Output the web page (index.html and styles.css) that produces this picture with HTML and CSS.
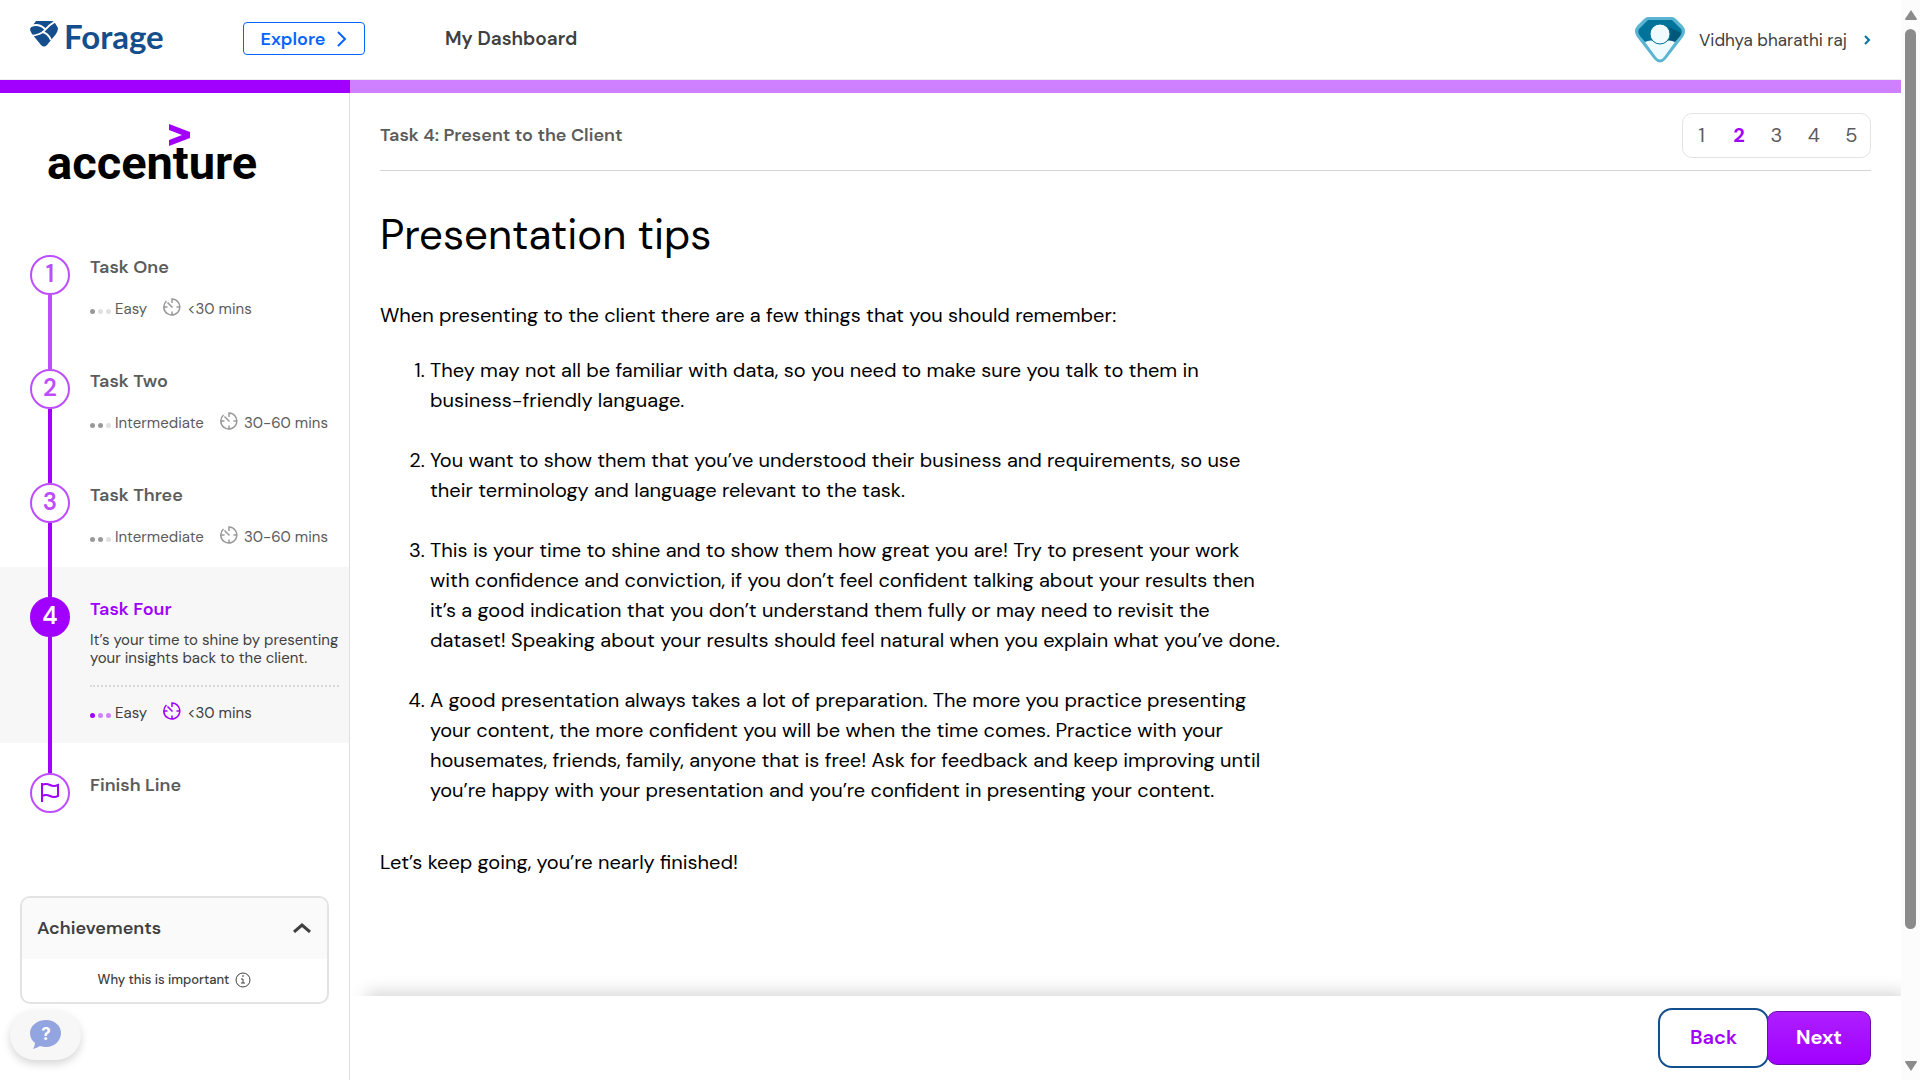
FILE: index.html
```html
<!DOCTYPE html>
<html lang="en">
<head>
<meta charset="utf-8">
<title>Task 4: Present to the Client</title>
<link rel="stylesheet" href="styles.css">
</head>
<body>
<div class="window">
  <div class="app">
    <header class="topbar">
      <a class="brand" href="#" aria-label="Forage">
        <svg class="brand-mark" viewBox="0 0 28 26" aria-hidden="true">
          <path fill="#144e8c" d="M6 0H22Q24 0 25 2L28 7Q28 10 26 13L17 24Q14 27 11 24L2 13Q0 10 0 8Q1 6 3 4Z"/>
          <path fill="none" stroke="#fff" stroke-width="2" d="M26 0Q19 4 15 9T0 15M1 5Q9 2 15 8M12 11Q18 12 21 19"/>
        </svg>
        <span class="brand-name">Forage</span>
      </a>
      <button class="explore" type="button">Explore
        <svg viewBox="0 0 10 16" aria-hidden="true"><path d="M1 1l7 7-7 7"/></svg>
      </button>
      <a class="nav-link" href="#">My Dashboard</a>
      <a class="user" href="#">
        <svg class="avatar" viewBox="0 0 50 46" aria-hidden="true">
          <path fill="#5ab4d2" d="M13 0H37Q39 0 41 2L48 9Q52 14 48 20L31 42Q25 49 19 42L2 20Q-2 14 2 9L9 2Q11 0 13 0Z"/>
          <path fill="#00739b" d="M13 3H37L46 12Q48 15 45 19L39 26H11L5 19Q2 15 4 12Z"/>
          <path fill="#005878" d="M34 10L46 16Q46 18 44 20L39 26L30 24Z"/>
          <path fill="#effbff" d="M10 25Q17 21 25 27Q33 21 40 25L29 40Q25 45 21 40Z"/>
          <circle cx="25" cy="17" r="10" fill="#effbff" stroke="#00739b"/>
        </svg>
        <span>Vidhya bharathi raj</span>
        <svg class="user-chevron" viewBox="0 0 8 10" aria-hidden="true"><path d="M2 1l4 4-4 4"/></svg>
      </a>
    </header>
    <div class="progress"><div class="progress-done"></div></div>
    <div class="columns">
      <aside class="sidebar">
        <svg class="company" viewBox="0 0 216 74" role="img" aria-label="accenture">
          <path fill="#a100ff" d="M122 2L143 10V16L122 24V18L135 13L122 8Z"/>
          <text class="company-name" x="0" y="57">accenture</text>
        </svg>
        <ol class="tasks">
          <li class="task">
            <div class="rail rail-first rail-soft"><span class="step">1</span></div>
            <div class="task-body">
              <a class="task-title" href="#">Task One</a>
              <div class="meta"><span class="dots"><i class="on"></i><i></i><i></i></span>Easy
                <svg class="clock" viewBox="0 0 36 36" aria-hidden="true"><path d="M18 10V2A16 16 0 1 1 7 6M18 27v7M2 18h7M27 18h7M9 9l10 10"/></svg>&lt;30 mins</div>
            </div>
          </li>
          <li class="task">
            <div class="rail rail-after-soft"><span class="step">2</span></div>
            <div class="task-body">
              <a class="task-title" href="#">Task Two</a>
              <div class="meta"><span class="dots"><i class="on"></i><i class="on"></i><i></i></span>Intermediate
                <svg class="clock" viewBox="0 0 36 36" aria-hidden="true"><path d="M18 10V2A16 16 0 1 1 7 6M18 27v7M2 18h7M27 18h7M9 9l10 10"/></svg>30-60 mins</div>
            </div>
          </li>
          <li class="task">
            <div class="rail"><span class="step">3</span></div>
            <div class="task-body">
              <a class="task-title" href="#">Task Three</a>
              <div class="meta"><span class="dots"><i class="on"></i><i class="on"></i><i></i></span>Intermediate
                <svg class="clock" viewBox="0 0 36 36" aria-hidden="true"><path d="M18 10V2A16 16 0 1 1 7 6M18 27v7M2 18h7M27 18h7M9 9l10 10"/></svg>30-60 mins</div>
            </div>
          </li>
          <li class="task task-active">
            <div class="rail"><span class="step">4</span></div>
            <div class="task-body">
              <a class="task-title" href="#">Task Four</a>
              <p class="task-text">It’s your time to shine by presenting your insights back to the client.</p>
              <div class="meta"><span class="dots"><i class="on"></i><i></i><i></i></span>Easy
                <svg class="clock" viewBox="0 0 36 36" aria-hidden="true"><path d="M18 10V2A16 16 0 1 1 7 6M18 27v7M2 18h7M27 18h7M9 9l10 10"/></svg>&lt;30 mins</div>
            </div>
          </li>
          <li class="task task-finish">
            <div class="rail rail-last"><span class="step"><svg class="flag" viewBox="0 0 20 20" aria-hidden="true"><path d="M2 1V20M2 3Q6 1 10 3T18 3V14Q14 16 10 14T2 14"/></svg></span></div>
            <div class="task-body"><a class="task-title" href="#">Finish Line</a></div>
          </li>
        </ol>
        <section class="achievements">
          <button class="achievements-head" type="button">Achievements
            <svg viewBox="0 0 18 10" aria-hidden="true"><path d="M1 9l8-7 8 7"/></svg>
          </button>
          <button class="why" type="button">Why this is important
            <svg viewBox="0 0 16 16" aria-hidden="true"><circle cx="8" cy="8" r="7"/><path d="M6 7h2v4M6 11h4"/><path d="M7 4h2"/></svg>
          </button>
        </section>
      </aside>
      <main class="main">
        <div class="content">
          <div class="content-head">
            <h2 class="crumb">Task 4: Present to the Client</h2>
            <nav class="pager"><a href="#">1</a><a href="#" class="current">2</a><a href="#">3</a><a href="#">4</a><a href="#">5</a></nav>
          </div>
          <article class="article">
            <h1>Presentation tips</h1>
            <p>When presenting to the client there are a few things that you should remember:</p>
            <ol class="tips">
              <li>They may not all be familiar with data, so you need to make sure you talk to them in business-friendly language.</li>
              <li>You want to show them that you’ve understood their business and requirements, so use their terminology and language relevant to the task.</li>
              <li>This is your time to shine and to show them how great you are! Try to present your work with confidence and conviction, if you don’t feel confident talking about your results then it’s a good indication that you don’t understand them fully or may need to revisit the dataset! Speaking about your results should feel natural when you explain what you’ve done.</li>
              <li>A good presentation always takes a lot of preparation. The more you practice presenting your content, the more confident you will be when the time comes. Practice with your housemates, friends, family, anyone that is free! Ask for feedback and keep improving until you’re happy with your presentation and you’re confident in presenting your content.</li>
            </ol>
            <p>Let’s keep going, you’re nearly finished!</p>
          </article>
        </div>
        <footer class="actions">
          <button class="back" type="button">Back</button>
          <button class="next" type="button">Next</button>
        </footer>
      </main>
    </div>
    <button class="help" type="button" aria-label="Help">
      <svg viewBox="0 0 32 30" aria-hidden="true"><path fill="#93a5e0" d="M16 0C25 0 31 6 31 13S25 27 16 27Q13 27 10 26Q7 28 3 29Q5 26 5 23Q0 19 0 13C0 6 7 0 16 0Z"/><text class="help-mark" x="16" y="20">?</text></svg>
    </button>
  </div>
  <div class="scroll" aria-hidden="true">
    <svg viewBox="0 0 12 10"><path d="M6 0L12 9Q12 10 11 10H1Q0 10 0 9Z"/></svg>
    <div class="scroll-track"><div class="scroll-thumb"></div></div>
    <svg viewBox="0 0 12 10"><path d="M6 10L12 1Q12 0 11 0H1Q0 0 0 1Z"/></svg>
  </div>
</div>
</body>
</html>
```
FILE: styles.css
```css
* { box-sizing: border-box; }
body { margin: 0; font-family: "DM Sans", Inter, sans-serif; color: #404040; background: #fff; }
a { color: inherit; text-decoration: none; }
button { font: inherit; color: inherit; background: none; border: 0; padding: 0; }
svg { display: block; flex: none; }
ol { margin: 0; padding: 0; }

.window { display: flex; height: 100vh; min-height: 1020px; }
.app { flex: 1; min-width: 0; display: flex; flex-direction: column; position: relative; }

.topbar { display: flex; align-items: center; height: 80px; padding: 0 30px 2px; border-bottom: 1px solid #eee; flex: none; }
.brand { display: flex; align-items: center; gap: 6px; width: 213px; color: #144e8c; }
.brand-mark { width: 28px; height: 26px; margin-bottom: 10px; }
.brand-name { padding-bottom: 6px; font-family: Lato, sans-serif; font-size: 33px; font-weight: 700; line-height: 40px; }
.explore { display: flex; align-items: center; justify-content: center; gap: 12px; width: 122px; height: 33px; border: 1px solid #0566ff; border-radius: 4px; color: #0566ff; font-size: 18px; font-weight: 600; line-height: 20px; }
.explore svg { width: 10px; height: 16px; fill: none; stroke: #0566ff; stroke-width: 2; }
.nav-link { margin-left: 80px; font-size: 19px; font-weight: 600; }
.user { display: flex; align-items: center; margin-left: auto; padding-top: 2px; font-size: 17px; }
.avatar { width: 50px; height: 46px; margin-right: 14px; }
.user-chevron { width: 8px; height: 10px; margin-left: 16px; fill: none; stroke: #00739b; stroke-width: 2; }

.progress { height: 13px; background: #ce80ff; flex: none; }
.progress-done { width: 350px; height: 100%; background: #a100ff; }
.columns { flex: 1; display: flex; min-height: 0; }

.sidebar { width: 350px; flex: none; border-right: 1px solid #e0e0e0; padding-top: 29px; }
.company { width: 216px; height: 74px; margin: 0 0 29px 47px; }
.company-name { font: 700 47px Roboto, sans-serif; fill: #000; }
.tasks { list-style: none; }
.task { display: flex; gap: 20px; min-height: 114px; padding: 0 10px 0 30px; color: #5c5c5c; }
.task-active { min-height: 176px; background: #f7f7f7; color: #404040; }
.task-finish { min-height: 70px; }
.rail { display: flex; flex-direction: column; align-items: center; width: 40px; flex: none; }
.rail::before, .rail::after { content: ""; width: 4px; background: #a100ff; }
.rail::before { height: 30px; }
.rail::after { flex: 1; }
.rail-first::before, .rail-last::after { visibility: hidden; }
.rail-soft::after, .rail-after-soft::before { background: #bd4dff; }
.step { display: flex; align-items: center; justify-content: center; width: 40px; height: 40px; padding-bottom: 2px; border: 2px solid #bd4dff; border-radius: 50%; background: #fff; color: #bd4dff; font-size: 24px; font-weight: 600; line-height: 30px; }
.task-active .step { border-color: #a100ff; background: #a100ff; color: #fff; }
.flag { width: 20px; height: 20px; fill: none; stroke: #a100ff; stroke-width: 2; }
.task-body { flex: 1; min-width: 0; padding-top: 30px; }
.task-title { display: block; font-size: 18px; font-weight: 600; line-height: 24px; }
.task-active .task-title { color: #a100ff; }
.meta { display: flex; align-items: center; margin-top: 19px; font-size: 15px; line-height: 20px; white-space: nowrap; }
.task-active .meta { margin-top: 15px; }
.dots { display: flex; gap: 3px; margin-right: 4px; padding-top: 4px; }
.dots i { width: 5px; height: 5px; border-radius: 50%; background: #e0e0e0; }
.dots i.on { background: #999; }
.task-active .dots i { background: #ce80ff; }
.task-active .dots i.on { background: #a100ff; }
.clock { width: 18px; height: 18px; margin: 0 6px 4px 16px; fill: none; stroke: #999; stroke-width: 3; }
.task-active .clock { stroke: #a100ff; }
.task-text { margin: 10px 0 0; padding-bottom: 18px; border-bottom: 2px dotted #d9d9d9; font-size: 15px; line-height: 18px; }

.achievements { margin: 83px 20px 0; border: 2px solid #e3e3e3; border-radius: 10px; overflow: hidden; }
.achievements-head { display: flex; align-items: center; justify-content: space-between; width: 100%; height: 61px; padding: 0 16px 2px 15px; background: #fafafa; font-size: 18px; font-weight: 600; }
.achievements-head svg { width: 18px; height: 10px; fill: none; stroke: #404040; stroke-width: 3; }
.why { display: flex; align-items: center; justify-content: center; gap: 6px; width: 100%; height: 43px; padding-bottom: 2px; font-size: 13px; font-weight: 500; }
.why svg { width: 16px; height: 16px; fill: none; stroke: #404040; }

.main { flex: 1; min-width: 0; display: flex; flex-direction: column; }
.content { flex: 1; min-height: 0; padding: 20px 30px 0; }
.content-head { display: flex; align-items: center; justify-content: space-between; padding-bottom: 12px; border-bottom: 1px solid #d4d4d4; }
.crumb { margin: 0; padding-bottom: 2px; font-size: 18px; font-weight: 600; color: #5c5c5c; }
.pager { display: grid; grid-template-columns: repeat(5, 1fr); align-items: center; width: 189px; height: 45px; padding-bottom: 2px; border: 1px solid #e3e3e3; border-radius: 10px; font-size: 20px; text-align: center; color: #5c5c5c; }
.pager .current { color: #a100ff; font-weight: 700; }
.article { max-width: 900px; padding-top: 34px; color: #000; font-size: 20px; line-height: 30px; }
.article h1 { margin: 0 0 35px; font-size: 42px; font-weight: 400; line-height: 60px; }
.article p { margin: 0 0 25px; }
.tips { padding-left: 50px; margin-bottom: 42px; }
.tips li + li { margin-top: 30px; }

.actions { display: flex; align-items: center; justify-content: flex-end; height: 84px; padding: 0 30px; background: #fff; box-shadow: 10px -10px 16px -6px rgba(0, 0, 0, .16); clip-path: inset(-30px 0 0 0); flex: none; }
.back { width: 111px; height: 60px; padding-bottom: 2px; border: 2px solid #144e8c; border-radius: 14px; color: #a100ff; font-size: 20px; font-weight: 600; }
.next { width: 104px; height: 54px; margin-left: -2px; padding-bottom: 2px; border: 1px solid #6a0dad; border-radius: 10px; background: linear-gradient(#ae1fff, #a100ff); color: #fff; font-size: 20px; font-weight: 700; }

.help { position: absolute; left: 10px; bottom: 20px; display: flex; align-items: center; justify-content: center; width: 71px; height: 50px; border-radius: 25px; background: #f7f7f7; box-shadow: 0 4px 8px rgba(0, 0, 0, .16); }
.help svg { width: 32px; height: 30px; }
.help-mark { font: 700 17px Inter, sans-serif; fill: #fff; text-anchor: middle; }

.scroll { display: flex; flex-direction: column; align-items: center; width: 19px; padding: 10px 0 9px; background: #fcfcfc; flex: none; }
.scroll svg { width: 12px; height: 10px; fill: #8b8b8b; }
.scroll-track { flex: 1; width: 11px; padding: 9px 0; }
.scroll-thumb { height: 88%; border-radius: 6px; background: #8b8b8b; }
```
